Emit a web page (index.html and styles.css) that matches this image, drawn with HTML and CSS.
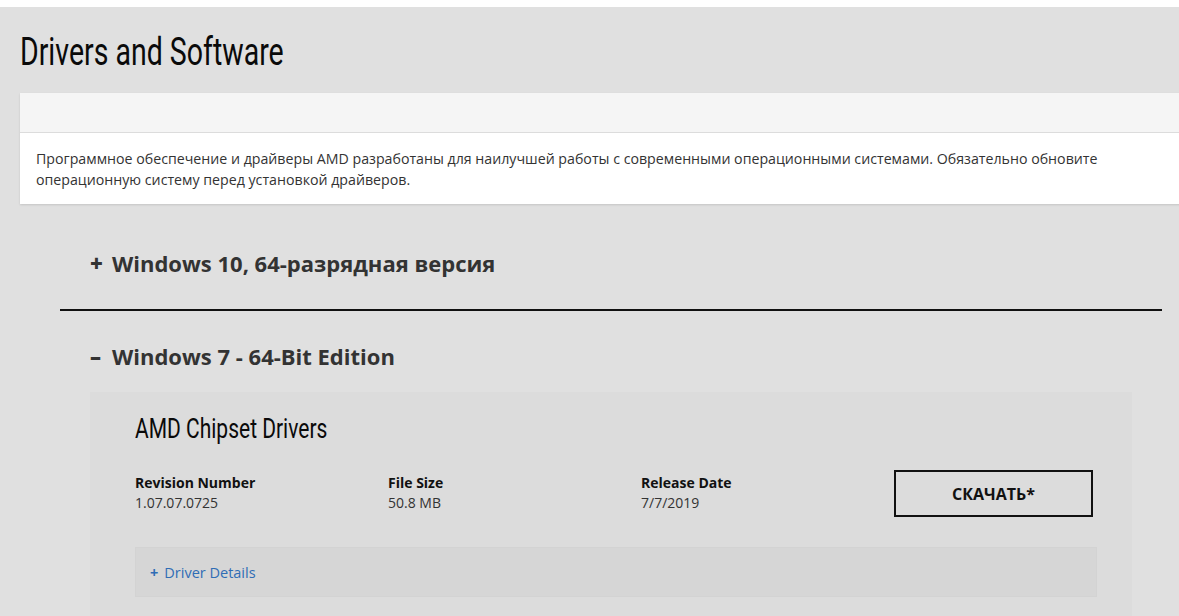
FILE: index.html
```html
<!DOCTYPE html>
<html lang="ru">
<head>
    <meta charset="UTF-8">
    <meta name="viewport" content="width=device-width, initial-scale=1.0">
    <title>Drivers and Software</title>
    <link rel="stylesheet" href="styles.css">
</head>
<body>
    <div class="page">
        <h1 class="page-title"><span class="narrow">Drivers and Software</span></h1>

        <div class="notice">
            <div class="notice-head"></div>
            <div class="notice-body">
                Программное обеспечение и драйверы AMD разработаны для наилучшей работы с современными операционными системами. Обязательно обновите операционную систему перед установкой драйверов.
            </div>
        </div>

        <div class="os-list">
            <div class="os-item">
                <h2 class="os-title"><span class="os-sign">+</span>Windows 10, 64-разрядная версия</h2>
            </div>
            <div class="os-item os-open">
                <h2 class="os-title"><span class="os-sign">–</span>Windows 7 - 64-Bit Edition</h2>

                <div class="driver">
                    <h3 class="driver-name"><span class="narrow">AMD Chipset Drivers</span></h3>
                    <div class="driver-meta">
                        <div class="meta">
                            <div class="meta-label">Revision Number</div>
                            <div class="meta-value">1.07.07.0725</div>
                        </div>
                        <div class="meta">
                            <div class="meta-label">File Size</div>
                            <div class="meta-value">50.8 MB</div>
                        </div>
                        <div class="meta">
                            <div class="meta-label">Release Date</div>
                            <div class="meta-value">7/7/2019</div>
                        </div>
                        <div class="meta meta-btn">
                            <a class="btn-download" href="#">СКАЧАТЬ*</a>
                        </div>
                    </div>
                    <div class="details">
                        <a class="details-link" href="#"><span class="details-sign">+</span>Driver Details</a>
                    </div>
                </div>
            </div>
        </div>
    </div>
</body>
</html>
```

FILE: styles.css
```css
html, body{
    margin: 0;
    padding: 0;
}
body{
    background: #fff;
    font-family: "Open Sans", "Noto Sans", sans-serif;
    color: #333;
    overflow: hidden;
}
.page{
    margin-top: 7px;
    background: #e0e0e0;
    padding: 20px 0 40px 20px;
    min-height: 600px;
}
/* no condensed face installed, so squeeze Roboto */
.narrow{
    display: inline-block;
    transform: scaleX(0.75);
    transform-origin: left center;
    white-space: nowrap;
}
.page-title{
    margin: 2px 0 18px 0;
    font-family: "Roboto", "Liberation Sans", sans-serif;
    font-weight: normal;
    font-size: 38px;
    line-height: 46px;
    color: #0a0a0a;
}
/* notice block */
.notice{
    background: #fff;
    box-shadow: 0 1px 2px rgba(0, 0, 0, .12);
    margin-right: -20px;
}
.notice-head{
    height: 39px;
    background: #f5f5f5;
    border-bottom: 1px solid #dcdcdc;
}
.notice-body{
    padding: 15px 60px 14px 16px;
    font-size: 14.2px;
    line-height: 21px;
    color: #333;
}
/* os accordion */
.os-list{
    margin: 13px 17px 0 40px;
}
.os-item{
    padding: 0 30px;
}
.os-item + .os-item{
    border-top: 2px solid #111;
}
.os-title{
    margin: 0;
    font-size: 22px;
    font-weight: 700;
    line-height: 30px;
    color: #333;
    padding: 31px 0 31px 0;
}
.os-open .os-title{
    padding: 30px 0 21px 0;
}
.os-sign{
    display: inline-block;
    width: 22px;
    font-weight: 800;
}
/* driver card */
.driver{
    background: #dcdcdc;
    padding: 19px 35px 20px 45px;
}
.driver-name{
    margin: 0 0 23px 0;
    font-family: "Roboto", "Liberation Sans", sans-serif;
    font-weight: normal;
    font-size: 28px;
    line-height: 36px;
    color: #0a0a0a;
}
.driver-meta{
    display: grid;
    grid-template-columns: 253px 253px 253px 199px;
    align-items: start;
}
.meta-label{
    font-size: 14px;
    font-weight: 700;
    color: #111;
    line-height: 20px;
    margin-top: 3px;
}
.meta-value{
    font-size: 14px;
    color: #333;
    line-height: 20px;
}
.btn-download{
    display: flex;
    align-items: center;
    justify-content: center;
    height: 43px;
    border: 2px solid #111;
    color: #111;
    text-decoration: none;
    font-weight: 700;
    font-size: 16px;
}
.details{
    margin-top: 30px;
    background: #d6d6d6;
    border: 1px solid #d3d3d3;
    height: 48px;
    display: flex;
    align-items: center;
    padding-left: 14px;
}
.details-link{
    color: #2f6db5;
    text-decoration: none;
    font-size: 14.5px;
}
.details-sign{
    font-weight: 700;
    margin-right: 6px;
}
```
